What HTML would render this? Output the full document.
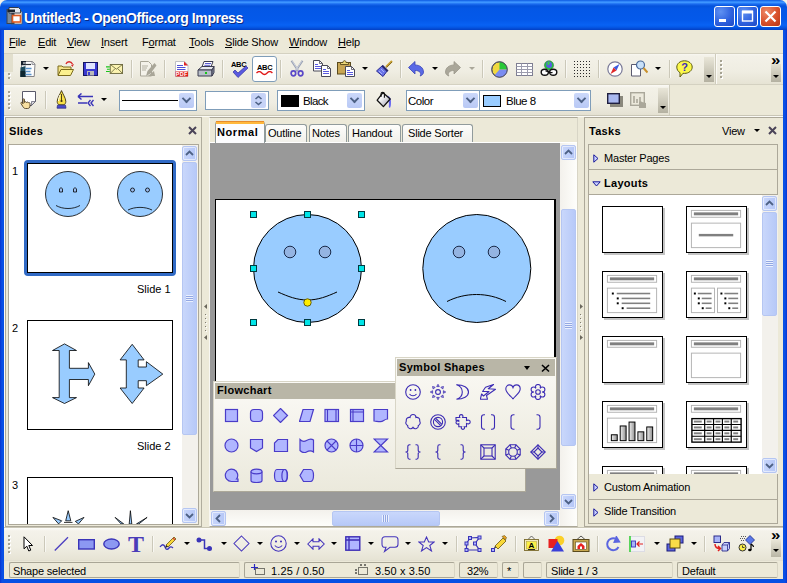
<!DOCTYPE html>
<html lang="en">
<head>
<meta charset="utf-8">
<title>Untitled3 - OpenOffice.org Impress</title>
<style>
html,body{margin:0;padding:0;}
body{width:787px;height:583px;overflow:hidden;background:#ece9d8;font-family:"Liberation Sans",sans-serif;font-size:11px;color:#000;position:relative;}
.a{position:absolute;}
.t{position:absolute;white-space:nowrap;line-height:13px;letter-spacing:-0.2px;}
.b{font-weight:bold;letter-spacing:0.3px;}
u{text-decoration:underline;}
/* window frame */
#frame{left:0;top:0;width:787px;height:583px;background:linear-gradient(to right,#0634d0 0,#0a4fe6 2px,#0650e4 4px,#0650e4 783px,#0a4fe6 785px,#0634d0 787px);}
#titlebar{left:0;top:0;width:787px;height:30px;background:linear-gradient(to bottom,#0651dc 0px,#2a7ff6 1px,#3d95ff 2.5px,#1b6cf0 4px,#0453dc 6px,#0457e6 9px,#0459ea 20px,#0862f4 25px,#0559e8 27px,#0340c4 30px);border-radius:7px 7px 0 0;}
#client{left:4px;top:30px;width:779px;height:549px;background:#ece9d8;}
#title{left:24px;top:9px;font-size:14px;font-weight:bold;color:#fff;line-height:18px;text-shadow:1px 1px 0 #0a2a86;letter-spacing:-0.38px;}
.wb{top:6px;width:21px;height:21px;border-radius:3px;border:1px solid #fff;box-sizing:border-box;background:radial-gradient(circle at 30% 25%,#5f91f2 0%,#2f62df 55%,#1e49c4 100%);}
#wclose{background:radial-gradient(circle at 30% 25%,#ee8a68 0%,#d9512c 55%,#b83415 100%);}
/* menu */
#menubar{left:4px;top:30px;width:779px;height:23px;background:#ece9d8;}
.mi{top:36px;font-size:11px;}
/* toolbars */
.tbsep{width:1px;background:#cbc8b9;box-shadow:1px 0 0 rgba(255,255,255,.6);}
.dd{width:0;height:0;border-left:3px solid transparent;border-right:3px solid transparent;border-top:3px solid #000;}
.hdl{width:3px;background-image:repeating-linear-gradient(to bottom,#a5a292 0,#a5a292 2px,transparent 2px,transparent 4px),repeating-linear-gradient(to bottom,#fff 0,#fff 2px,transparent 2px,transparent 4px);background-position:0 0,1px 1px;background-size:2px 100%,2px 100%;background-repeat:no-repeat;}
.cb{box-sizing:border-box;background:#fff;border:1px solid #7f9db9;}
.cbb{width:15px;height:15px;margin-top:1px;background:linear-gradient(to bottom,#cbd8fa,#b9c9f5);border-radius:2px;}
.cbb:after{content:"";position:absolute;left:4px;top:2px;width:5px;height:5px;border-right:2px solid #4d6185;border-bottom:2px solid #4d6185;transform:rotate(45deg) scale(0.950);}
.grip{width:7px;height:7px;background-image:repeating-linear-gradient(to bottom,#eef3ff 0,#eef3ff 1px,#8ea3e0 1px,#8ea3e0 2px);opacity:.9;}
.hdl1{width:1px;background-image:repeating-linear-gradient(to bottom,#77746a 0,#77746a 1px,transparent 1px,transparent 3px);}
.tab{height:18px;box-sizing:border-box;border:1px solid #919b9c;border-bottom:none;border-radius:3px 3px 0 0;background:linear-gradient(to bottom,#fdfdfb,#f1f0ea);}
.gripv{width:7px;height:7px;background-image:repeating-linear-gradient(to right,#eef3ff 0,#eef3ff 1px,#8ea3e0 1px,#8ea3e0 2px);opacity:.9;}
.sf{height:16px;box-sizing:border-box;border:1px solid #a9a696;border-right-color:#d8d5c4;border-radius:2px;}
.st{font-size:11px;}
.hdl2{width:2px;background-image:repeating-linear-gradient(to bottom,#7f7c70 0,#7f7c70 1px,transparent 1px,transparent 4px),repeating-linear-gradient(to bottom,#fff 0,#fff 1px,transparent 1px,transparent 4px);background-position:0 0,1px 1px;background-size:1px 100%,1px 100%;background-repeat:no-repeat;}
/* generic panel */
.hdr{font-size:11px;font-weight:bold;letter-spacing:0.3px;}
/* scrollbars */
.sbtrack{background:#f3f1ec;}
.sbbtn{width:15px;height:15px;border:1px solid #b5c6f2;box-shadow:inset 0 0 0 1px rgba(255,255,255,.55);border-radius:2px;box-sizing:border-box;background:linear-gradient(to right,#c9d7fb,#b4c6f7);}
.sbthumb{border:1px solid #b5c6f2;border-radius:2px;box-sizing:border-box;background:linear-gradient(to right,#c9d7fb,#b7c9f8);}
</style>
</head>
<body>
<div id="frame" class="a"></div>
<div class="a" style="left:0;top:0;width:8px;height:8px;background:#f4f2e8;"></div>
<div class="a" style="left:779px;top:0;width:8px;height:8px;background:#f4f2e8;"></div>
<div id="titlebar" class="a"></div>
<div id="client" class="a"></div>

<!-- TITLE BAR -->
<div id="title" class="t">Untitled3 - OpenOffice.org Impress</div>
<div class="a wb" style="left:714px;"></div>
<div class="a wb" style="left:737px;"></div>
<div class="a wb" id="wclose" style="left:760px;"></div>

<svg class="a" style="left:6px;top:7px" width="17" height="18" viewBox="0 0 17 18">
<path d="M5 3h9l2 2.500V17H5z" fill="#f4f4f4" stroke="#5a5a5a" stroke-width="0.800"/>
<path d="M0.500 2h8v15h-8z" fill="#3a4450"/><path d="M1.500 5h4v11h-4z" fill="#7a8a9a"/>
<path d="M3 .5h9.500l2 2V6H3z" fill="#e4e8ee" stroke="#2a323c" stroke-width="0.900"/>
<path d="M2 2.500h7v2.500H2z" fill="#1a2430"/>
<rect x="6.500" y="8.500" width="8" height="6.500" fill="#fff" stroke="#e05a20" stroke-width="1.600"/>
</svg>
<svg class="a" style="left:714px;top:6px" width="21" height="21" viewBox="0 0 21 21"><rect x="5" y="13" width="7" height="3" fill="#fff"/></svg>
<svg class="a" style="left:737px;top:6px" width="21" height="21" viewBox="0 0 21 21"><rect x="5.500" y="5.500" width="10" height="9.500" fill="none" stroke="#fff" stroke-width="1.400"/><rect x="5" y="4.500" width="11" height="3" fill="#fff"/></svg>
<svg class="a" style="left:760px;top:6px" width="21" height="21" viewBox="0 0 21 21"><path d="M5.500 5.500l10 10M15.500 5.500l-10 10" stroke="#fff" stroke-width="2.200"/></svg>
<!-- MENU BAR -->
<div id="menubar" class="a"></div>
<div class="t mi" style="left:9px;"><u>F</u>ile</div>
<div class="t mi" style="left:38px;"><u>E</u>dit</div>
<div class="t mi" style="left:67px;"><u>V</u>iew</div>
<div class="t mi" style="left:101px;"><u>I</u>nsert</div>
<div class="t mi" style="left:142px;">F<u>o</u>rmat</div>
<div class="t mi" style="left:189px;"><u>T</u>ools</div>
<div class="t mi" style="left:225px;"><u>S</u>lide Show</div>
<div class="t mi" style="left:289px;"><u>W</u>indow</div>
<div class="t mi" style="left:338px;"><u>H</u>elp</div>

<!-- TOOLBAR 1 -->
<div class="a" style="left:4px;top:53px;width:779px;height:1px;background:#d4d1c1;z-index:1;"></div>
<div class="a" style="left:4px;top:53px;width:779px;height:31px;background:linear-gradient(to bottom,#fbfaf6 0,#f3f1e8 3px,#efede2 60%,#e6e3d4 100%);"></div>
<div class="a" style="left:4px;top:84px;width:779px;height:1px;background:#d4d1c1;"></div>
<div class="a" style="left:4px;top:54px;width:9px;height:18px;background:#e2dfcd;"></div>
<div class="a hdl" style="left:8px;top:73px;height:6px;"></div>
<!-- new doc -->
<svg class="a" style="left:19px;top:60px" width="17" height="18" viewBox="0 0 17 18">
<path d="M3 1.500h10.500l2.500 2.500-.8 12.500H1.500z" fill="#fdfdfd" stroke="#77777c" stroke-width="0.900"/>
<path d="M13 1.500v3h3" fill="#e0e0e0" stroke="#77777c" stroke-width="0.700"/>
<rect x="2" y="1" width="5" height="4.200" fill="#16202c"/>
<path d="M4 3h7" stroke="#fff" stroke-width="1"/><path d="M6 4.500h6" stroke="#30343c" stroke-width="1.200"/>
<path d="M1.500 7.500L6.500 6v11h-5z" fill="#1c4a5c"/><path d="M1.500 11h5v6h-5z" fill="#0c2630"/>
<path d="M6.500 8.500h6M6.500 11.500h5M6.500 14.500h6" stroke="#5a94cc" stroke-width="1.600"/>
</svg>
<div class="a dd" style="left:43px;top:67px;"></div>
<!-- open -->
<svg class="a" style="left:56px;top:60px" width="19" height="17" viewBox="0 0 19 17">
<path d="M2 15V6h4l1 1h8v3" fill="#f5e58a" stroke="#7a6a1c"/>
<path d="M2 15.500l3-6h12.500l-3 6z" fill="#fbf08e" stroke="#7a6a1c"/>
<path d="M10 4c1-3 5-3 6.500 0" fill="none" stroke="#d82a2a" stroke-width="1.300"/><path d="M15 5l3-1-1.500 3z" fill="#d82a2a"/>
</svg>
<!-- save -->
<svg class="a" style="left:83px;top:62px" width="15" height="14" viewBox="0 0 15 14">
<rect x="0.500" y="0.500" width="14" height="13" fill="#3a3ad0" stroke="#141460"/>
<rect x="3" y="1" width="9" height="6" fill="#dfe4ff"/>
<rect x="4" y="9" width="7" height="4.500" fill="#b9b9b9"/><rect x="5" y="10" width="2" height="3" fill="#3a3ad0"/>
</svg>
<!-- mail -->
<svg class="a" style="left:106px;top:64px" width="17" height="10.400" viewBox="0 0 18 11">
<rect x="4.500" y="0.500" width="13" height="9.500" fill="#fbf3b0" stroke="#6e6a40"/>
<path d="M4.500 0.500l6.500 5 6.500-5M4.500 10l5-5M17.500 10l-5-5" fill="none" stroke="#6e6a40" stroke-width="0.900"/>
<path d="M0 3h4M1 5.500h3M0 8h4" stroke="#19c419" stroke-width="1.200"/>
</svg>
<div class="a tbsep" style="left:131px;top:60px;height:18px;"></div>
<!-- edit doc (grey) -->
<svg class="a" style="left:139px;top:61px" width="18" height="16" viewBox="0 0 18 16">
<path d="M1.500 0.500h8l3 3v11.500h-11z" fill="#f4f2ea" stroke="#a9a698"/>
<path d="M3 5h6M3 7h5M3 9h4" stroke="#b4b1a3"/>
<path d="M15.500 2l-7 8-1.500 5 4.500-2.500 6-8z" fill="#a9a698"/>
<path d="M9 15l6-5 1 5z" fill="#a9a698"/>
</svg>
<div class="a tbsep" style="left:164px;top:60px;height:18px;"></div>
<!-- pdf -->
<svg class="a" style="left:175px;top:61px" width="14" height="16" viewBox="0 0 14 16">
<path d="M0.500 0.500h9l3.500 3.500v11.500h-12.500z" fill="#fff" stroke="#b8b8c0" stroke-width="0.900"/>
<path d="M9 0.500l4 4H9z" fill="#e02020"/>
<path d="M2 4.500h6M2 6.500h8.500M2 8.500h8.500" stroke="#5050d8" stroke-width="1"/>
<rect x="0.500" y="10.500" width="12.500" height="5" fill="#e01818"/>
<text x="6.800" y="14.800" font-family="Liberation Sans,sans-serif" font-weight="bold" font-size="5.500" text-anchor="middle" fill="#fff" letter-spacing="0.300">PDF</text>
</svg>
<!-- print -->
<svg class="a" style="left:197px;top:61px" width="18" height="16" viewBox="0 0 18 16">
<path d="M5 6l2-5.500h9l-2 5.500z" fill="#fff" stroke="#3c3c50"/>
<path d="M8 2.500h6M7.300 4.300h6" stroke="#5a5ad0"/>
<path d="M1 9l4-3.500h12l-2 3.500z" fill="#e6e8ee" stroke="#3c3c50"/>
<path d="M1 9h14v6H1z" fill="#b8bec8" stroke="#3c3c50"/>
<path d="M15 9l2-3.500v6L15 15z" fill="#8890a0" stroke="#3c3c50"/>
<rect x="8" y="11" width="2" height="2" fill="#16c816"/>
</svg>
<div class="a tbsep" style="left:222px;top:60px;height:18px;"></div>
<!-- spellcheck -->
<div class="t b" style="left:231px;top:60px;font-size:7.500px;line-height:9px;letter-spacing:-0.300px;">ABC</div>
<svg class="a" style="left:232px;top:66px" width="17" height="12" viewBox="0 0 17 12"><path d="M1 6l2-2 3 3 8-7 2 2-10 9.500z" fill="#5a5ae0" stroke="#3030a0" stroke-width="0.700"/></svg>
<!-- autospell pressed -->
<div class="a" style="left:252px;top:56px;width:25px;height:26px;box-sizing:border-box;background:#fff;border:1px solid #7f9db9;border-radius:3px;"></div>
<div class="t b" style="left:257px;top:63px;font-size:7.500px;line-height:9px;letter-spacing:-0.300px;">ABC</div>
<svg class="a" style="left:256px;top:71px" width="17" height="5" viewBox="0 0 17 5"><path d="M0.500 2c2-2 3.500-2 5.300 0s3.500 2 5.300 0 3.500-2 5.300 0" fill="none" stroke="#e01818" stroke-width="1.300"/></svg>
<div class="a tbsep" style="left:280px;top:60px;height:18px;"></div>
<!-- cut -->
<svg class="a" style="left:290px;top:60px" width="14" height="17" viewBox="0 0 14 17">
<path d="M1.500 0.800l7.500 11.200M12.500 0.800L5 12" stroke="#9aa2b4" stroke-width="2" fill="none"/>
<path d="M2.300 1.200l6.700 10.200M11.700 1.200L5 11.400" stroke="#dfe3ec" stroke-width="0.700" fill="none"/>
<ellipse cx="3.400" cy="13.300" rx="2.300" ry="2.500" fill="none" stroke="#5a48c8" stroke-width="1.700"/>
<ellipse cx="10.600" cy="13.300" rx="2.300" ry="2.500" fill="none" stroke="#5a48c8" stroke-width="1.700"/>
</svg>
<!-- copy -->
<svg class="a" style="left:313px;top:60px" width="18" height="17" viewBox="0 0 18 17">
<path d="M0.500 0.500h6l3 3v7.500h-9z" fill="#fff" stroke="#4a4a58"/>
<path d="M6.500 0.500v3h3" fill="none" stroke="#4a4a58" stroke-width="0.800"/>
<path d="M2 4.500h3M2 6.500h6M2 8.500h6" stroke="#5a5ae0" stroke-width="1"/>
<path d="M8.500 5.500h6l3 3v8h-9z" fill="#fff" stroke="#4a4a58"/>
<path d="M14.500 5.500v3h3" fill="none" stroke="#4a4a58" stroke-width="0.800"/>
<path d="M10 9.500h3M10 11.500h6M10 13.500h6" stroke="#5a5ae0" stroke-width="1"/>
</svg>
<!-- paste -->
<svg class="a" style="left:337px;top:60px" width="18" height="17" viewBox="0 0 18 17">
<rect x="0.500" y="2.500" width="13" height="11.500" fill="#c8a654" stroke="#5a4a1c"/>
<path d="M3.500 4.500v-2h2.500c0-2.500 3-2.500 3 0h2.500v2z" fill="#ecd878" stroke="#5a4a1c" stroke-width="0.900"/>
<path d="M8.500 6.500h6l3 3v7h-9z" fill="#fff" stroke="#4a4a58"/>
<path d="M14.500 6.500v3h3" fill="none" stroke="#4a4a58" stroke-width="0.800"/>
<path d="M10 10.500h3M10 12.500h6M10 14.500h6" stroke="#5a5ae0" stroke-width="1"/>
</svg>
<div class="a dd" style="left:362px;top:67px;"></div>
<!-- format paintbrush -->
<svg class="a" style="left:376px;top:60px" width="17" height="17" viewBox="0 0 17 17">
<path d="M10 7l6-6" stroke="#c8a030" stroke-width="2.200"/><path d="M10.500 7.500l5.500-5.500" stroke="#6a5010" stroke-width="0.700"/>
<path d="M0.500 11l6-5.500 5 5-4.500 6z" fill="#6a74e8" stroke="#2a2a90"/>
<path d="M7 5l5.500 5.500-1.500 1.500-5.500-5.500z" fill="#28286a"/>
<path d="M3 11l3 3M5 9l3 3" stroke="#b8c0ff" stroke-width="0.800"/>
</svg>
<div class="a tbsep" style="left:400px;top:60px;height:18px;"></div>
<!-- undo -->
<svg class="a" style="left:408px;top:61px" width="16" height="16" viewBox="0 0 16 16">
<path d="M0.500 6.500l6.500-6v3.500c5 0 8.500 3 8.500 7 0 2-1.500 3.500-3.500 4 1-1 1-2.500 0-3.800-1-1.200-2.700-1.700-5-1.700v3.500z" fill="#5a6ae6" stroke="#3a44b8" stroke-width="0.800"/>
</svg>
<div class="a dd" style="left:432px;top:67px;"></div>
<!-- redo grey -->
<svg class="a" style="left:445px;top:61px" width="16" height="16" viewBox="0 0 16 16">
<path d="M15.500 6.500l-6.500-6v3.500c-5 0-8.500 3-8.500 7 0 2 1.500 3.500 3.500 4-1-1-1-2.500 0-3.800 1-1.200 2.700-1.700 5-1.700v3.500z" fill="#aaa79a" stroke="#9a978a" stroke-width="0.800"/>
</svg>
<div class="a dd" style="left:469px;top:67px;border-top-color:#aaa79a;"></div>
<div class="a tbsep" style="left:482px;top:60px;height:18px;"></div>
<!-- chart pie -->
<svg class="a" style="left:491px;top:61px" width="17" height="17" viewBox="0 0 17 17">
<circle cx="8.500" cy="8.500" r="7.700" fill="#f0d840" stroke="#4a4a60" stroke-width="0.900"/>
<path d="M8.500 8.500V0.800A7.700 7.700 0 0 1 16.200 8.500z" fill="#28c838"/>
<path d="M8.500 8.500h7.700A7.700 7.700 0 0 1 3.500 14.300z" fill="#7a8cf0"/>
<circle cx="8.500" cy="8.500" r="7.700" fill="none" stroke="#4a4a60" stroke-width="0.900"/>
</svg>
<!-- table -->
<svg class="a" style="left:516px;top:63px" width="17" height="13" viewBox="0 0 17 13">
<rect x="0.500" y="0.500" width="16" height="12" fill="#fff" stroke="#7e7e92"/>
<path d="M0.500 3.500h16M0.500 6.500h16M0.500 9.500h16M5.500 0.500v12M11.500 0.500v12" stroke="#9c9cae" fill="none"/>
</svg>
<!-- hyperlink -->
<svg class="a" style="left:540px;top:60px" width="18" height="17" viewBox="0 0 18 17">
<circle cx="9" cy="5.300" r="4.600" fill="#28c040" stroke="#2a6a4a" stroke-width="0.500"/>
<path d="M6.500 2.500c1.500-1.500 4-1.200 5 .5s.5 4-1 4.800-3.500-.3-4.300-2z" fill="#5a5ae8"/><path d="M8 1.500l2 1-1 2.500-2-.5z" fill="#38d048"/>
<ellipse cx="4.800" cy="12.300" rx="3.600" ry="3" fill="#fff" stroke="#111" stroke-width="1.400"/>
<ellipse cx="13.200" cy="12.300" rx="3.600" ry="3" fill="#fff" stroke="#111" stroke-width="1.400"/>
<path d="M5.500 11.300c2-1.500 3.500 2.500 7 1" fill="none" stroke="#111" stroke-width="1.400"/>
</svg>
<div class="a tbsep" style="left:565px;top:60px;height:18px;"></div>
<!-- grid -->
<svg class="a" style="left:573px;top:60px" width="18" height="18" viewBox="0 0 18 18"><g fill="#2a2a2a"><rect x="1" y="1" width="1" height="1"/><rect x="4" y="1" width="1" height="1"/><rect x="7" y="1" width="1" height="1"/><rect x="10" y="1" width="1" height="1"/><rect x="13" y="1" width="1" height="1"/><rect x="16" y="1" width="1" height="1"/><rect x="1" y="4" width="1" height="1"/><rect x="4" y="4" width="1" height="1"/><rect x="7" y="4" width="1" height="1"/><rect x="10" y="4" width="1" height="1"/><rect x="13" y="4" width="1" height="1"/><rect x="16" y="4" width="1" height="1"/><rect x="1" y="7" width="1" height="1"/><rect x="4" y="7" width="1" height="1"/><rect x="7" y="7" width="1" height="1"/><rect x="10" y="7" width="1" height="1"/><rect x="13" y="7" width="1" height="1"/><rect x="16" y="7" width="1" height="1"/><rect x="1" y="10" width="1" height="1"/><rect x="4" y="10" width="1" height="1"/><rect x="7" y="10" width="1" height="1"/><rect x="10" y="10" width="1" height="1"/><rect x="13" y="10" width="1" height="1"/><rect x="16" y="10" width="1" height="1"/><rect x="1" y="13" width="1" height="1"/><rect x="4" y="13" width="1" height="1"/><rect x="7" y="13" width="1" height="1"/><rect x="10" y="13" width="1" height="1"/><rect x="13" y="13" width="1" height="1"/><rect x="16" y="13" width="1" height="1"/><rect x="1" y="16" width="1" height="1"/><rect x="4" y="16" width="1" height="1"/><rect x="7" y="16" width="1" height="1"/><rect x="10" y="16" width="1" height="1"/><rect x="13" y="16" width="1" height="1"/><rect x="16" y="16" width="1" height="1"/></g></svg>
<div class="a tbsep" style="left:598px;top:60px;height:18px;"></div>
<!-- navigator -->
<svg class="a" style="left:607px;top:61px" width="16" height="16" viewBox="0 0 16 16">
<circle cx="8" cy="8" r="7.200" fill="#fff" stroke="#7a7a98" stroke-width="1.200"/>
<path d="M12.500 3l-3 6.500-3-3z" fill="#3a5ae0"/><path d="M3.500 13l3-6.500 3 3z" fill="#e02828"/>
</svg>
<!-- zoom -->
<svg class="a" style="left:631px;top:60px" width="17" height="17" viewBox="0 0 17 17">
<path d="M0.500 4.500h7l2 2v9.500h-9z" fill="#fff" stroke="#5a5a70"/>
<circle cx="9.500" cy="5" r="4" fill="#c8e0f8" stroke="#4a6a9a" stroke-width="1.200"/>
<path d="M12.500 8l4 4.500" stroke="#c8902a" stroke-width="2"/>
</svg>
<div class="a dd" style="left:655px;top:67px;"></div>
<div class="a tbsep" style="left:669px;top:60px;height:18px;"></div>
<!-- help -->
<svg class="a" style="left:676px;top:60px" width="17" height="18" viewBox="0 0 17 18">
<path d="M8.500 0.800c4.300 0 7.700 2.800 7.700 6.300s-3.400 6.300-7.700 6.300c-.5 0-1 0-1.500-.1L4 17v-4.300C2 11.500.8 9.500.8 7.100.8 3.600 4.200.8 8.500.8z" fill="#fcf84a" stroke="#5a5a10" stroke-width="1"/>
<text x="8.500" y="11" font-family="Liberation Sans,sans-serif" font-weight="bold" font-size="11" text-anchor="middle" fill="#3a2ab8">?</text>
</svg>
<!-- overflow -->
<div class="a" style="left:704px;top:57px;width:10px;height:25px;background:linear-gradient(to bottom,#e9e6d8,#b4b1a1);"></div>
<div class="a dd" style="left:706px;top:75px;"></div>
<div class="a" style="left:715px;top:54px;width:1px;height:30px;background:#cfccbc;"></div><div class="a" style="left:716px;top:54px;width:1px;height:30px;background:#fbfaf6;"></div><div class="a hdl" style="left:720px;top:60px;height:19px;"></div>
<div class="a" style="left:771px;top:64px;width:10px;height:18px;background:linear-gradient(to bottom,#e4e1d2,#b4b1a1);"></div>
<div class="t b" style="left:771px;top:53px;font-size:14px;line-height:14px;letter-spacing:0;transform:scaleX(1.200);transform-origin:0 0;">»</div>
<div class="a dd" style="left:773px;top:75px;"></div>

<!--TB1END-->
<!-- TOOLBAR 2 -->
<div class="a" style="left:4px;top:85px;width:779px;height:30px;background:#ece9d8;"></div><div class="a" style="left:4px;top:85px;width:665px;height:30px;background:linear-gradient(to bottom,#fbfaf6 0,#f3f1e7 3px,#efede2 60%,#e4e1d2 100%);"></div><div class="a" style="left:669px;top:85px;width:1px;height:30px;background:#cfccbc;"></div>
<div class="a" style="left:4px;top:115px;width:779px;height:1px;background:#c9c6b6;"></div>
<div class="a" style="left:4px;top:116px;width:779px;height:1px;background:#fbfaf5;"></div>
<div class="a hdl" style="left:8px;top:91px;height:19px;"></div>
<!-- page+hand -->
<svg class="a" style="left:20px;top:91px" width="17" height="18" viewBox="0 0 17 18">
<path d="M2.500 0.500h13v10l-4 4h-9z" fill="#fff" stroke="#5a5a6a"/>
<path d="M15.500 10.500h-4v4z" fill="#d8d8e0" stroke="#5a5a6a" stroke-width="0.700"/>
<path d="M3 8.500c0-1 1.500-1 1.500 0v3c.5-1 1.700-1 2 0 .5-.8 1.600-.6 1.800.3.600-.6 1.700-.2 1.700.8v2.400c0 1.500-1 2.500-2.500 2.500h-2c-1.200 0-2-.8-2.600-1.800L1 12.500c-.5-1 .7-1.600 1.300-.8l.7 1z" fill="#f8e0a0" stroke="#3a2a10" stroke-width="0.800"/>
</svg>
<div class="a tbsep" style="left:45px;top:91px;height:18px;"></div>
<!-- pen nib -->
<svg class="a" style="left:56px;top:90px" width="11" height="19" viewBox="0 0 11 19">
<path d="M5.500 0.600C4.500 3.500 1.200 8 1.200 11.500c0 1.500.7 2.500 1.600 3.300h5.400c.9-.8 1.600-1.800 1.600-3.300C9.800 8 6.500 3.500 5.500 0.600z" fill="#f8e048" stroke="#3a3010" stroke-width="0.900"/>
<path d="M4 5c-.8 2-1.500 4-1.500 6" stroke="#fff" stroke-width="1" fill="none"/>
<path d="M5.500 4v7" stroke="#3a3010" stroke-width="0.900"/><circle cx="5.500" cy="11" r="1.100" fill="#3a3010"/>
<path d="M1.500 15.200h8l.5 3h-9z" fill="#4a4ad0" stroke="#28287a" stroke-width="0.700"/>
</svg>
<!-- arrows -->
<svg class="a" style="left:77px;top:93px" width="17" height="14" viewBox="0 0 17 14">
<path d="M1 3.500h15M1 3.500l3.500-3M1 3.500l3.500 3" stroke="#3a34b8" stroke-width="1.500" fill="none"/>
<path d="M1 10h9" stroke="#3a34b8" stroke-width="1.500"/>
<path d="M13.500 7L11 10l2.500 3M16.500 7L14 10l2.500 3" stroke="#3a34b8" stroke-width="1.400" fill="none"/>
</svg>
<div class="a dd" style="left:101px;top:98px;"></div>
<!-- line style combo -->
<div class="a cb" style="left:119px;top:90px;width:78px;height:21px;"></div>
<div class="a" style="left:122px;top:100px;width:56px;height:1px;background:#000;"></div>
<div class="a cbb" style="left:179px;top:92px;"></div>
<!-- width spin -->
<div class="a cb" style="left:205px;top:91px;width:64px;height:19px;"></div>
<div class="a" style="left:251px;top:93px;width:15px;height:15px;background:#c6d3f7;border-radius:2px;"></div>
<svg class="a" style="left:251px;top:93px" width="15" height="15" viewBox="0 0 15 15"><path d="M4.500 6l3-2.500 3 2.500M4.500 9l3 2.500 3-2.500" stroke="#4d6185" stroke-width="1.600" fill="none"/></svg>
<!-- colour combo -->
<div class="a cb" style="left:277px;top:90px;width:88px;height:21px;"></div>
<div class="a" style="left:281px;top:95px;width:18px;height:12px;background:#000;"></div>
<div class="t" style="left:303px;top:94px;font-size:11.500px;line-height:14px;letter-spacing:-0.650px;">Black</div>
<div class="a cbb" style="left:347px;top:92px;"></div>
<!-- bucket -->
<svg class="a" style="left:376px;top:91px" width="18" height="18" viewBox="0 0 18 18">
<defs><linearGradient id="bk" x1="0" y1="0" x2="1" y2="1"><stop offset="0.300" stop-color="#fff"/><stop offset="1" stop-color="#9a9aa8"/></linearGradient></defs>
<path d="M11.500 4.500c2.500 1 3.500 3 3.500 6 0 2.500 0 4.500-.8 6-.8.600-1.500 0-1.400-1.200.3-2.800.2-5.300-1.300-7z" fill="#6a6af0"/>
<path d="M1.200 9.200L7 1.700 14.200 8 7.400 15.600z" fill="url(#bk)" stroke="#111" stroke-width="1.300" stroke-linejoin="round"/>
<path d="M5 6V3c0-2.200 3.400-2.200 3.400 0v3.800" fill="none" stroke="#111" stroke-width="1.100"/>
</svg>
<!-- Color combo -->
<div class="a cb" style="left:406px;top:90px;width:74px;height:21px;"></div>
<div class="t" style="left:408px;top:94px;font-size:11.500px;line-height:14px;letter-spacing:-0.500px;">Color</div>
<div class="a cbb" style="left:463px;top:92px;"></div>
<!-- Blue 8 combo -->
<div class="a cb" style="left:479px;top:90px;width:112px;height:21px;"></div>
<div class="a" style="left:483px;top:95px;width:18px;height:12px;background:#99ccff;box-sizing:border-box;border:1px solid #000;"></div>
<div class="t" style="left:506px;top:94px;font-size:11.500px;line-height:14px;letter-spacing:-0.500px;">Blue 8</div>
<div class="a cbb" style="left:574px;top:92px;"></div>
<!-- shadow -->
<svg class="a" style="left:607px;top:93px" width="16" height="15" viewBox="0 0 16 15">
<rect x="3" y="3" width="13" height="11" fill="#8a887c"/>
<rect x="0.700" y="0.700" width="11.600" height="9.600" fill="#a9b8f0" stroke="#202040" stroke-width="1.400"/>
</svg>
<!-- greyed -->
<svg class="a" style="left:630px;top:92px" width="18" height="17" viewBox="0 0 18 17">
<rect x="0.700" y="0.700" width="13.600" height="12.600" fill="#ece9dc" stroke="#aaa79a" stroke-width="1.400"/>
<path d="M4 4v7M7 7v4M10 5v6" stroke="#aaa79a" stroke-width="1.600"/>
<path d="M9 10c1-1 2-1 3 0l4 1v5H9z" fill="#aaa79a"/>
</svg>
<div class="a" style="left:658px;top:88px;width:10px;height:25px;background:linear-gradient(to bottom,#e9e6d8,#b4b1a1);"></div>
<div class="a dd" style="left:660px;top:106px;"></div>

<!--TB2END-->
<!-- SLIDES PANEL -->
<div class="a" style="left:4px;top:117px;width:1px;height:410px;background:#fbfaf5;"></div>
<div class="a" style="left:5px;top:117px;width:197px;height:410px;box-sizing:border-box;border:1px solid #aca899;border-right-color:#b0ad9e;background:#ece9d8;"></div>
<div class="t hdr" style="left:9px;top:125px;">Slides</div>
<svg class="a" style="left:188px;top:126px" width="9" height="9" viewBox="0 0 9 9"><path d="M1 1l7 7M8 1l-7 7" stroke="#4a4458" stroke-width="2"/></svg>
<div class="a" style="left:8px;top:144px;width:191px;height:381px;box-sizing:border-box;border:1px solid #aca899;background:#fff;"></div>
<!-- scrollbar -->
<div class="a sbtrack" style="left:182px;top:145px;width:16px;height:379px;"></div>
<div class="a sbbtn" style="left:182px;top:146px;"></div>
<svg class="a" style="left:182px;top:146px" width="15" height="15" viewBox="0 0 15 15"><path d="M4 9l3.500-3.500 3.500 3.500" stroke="#4d6185" stroke-width="1.800" fill="none"/></svg>
<div class="a sbthumb" style="left:182px;top:162px;width:15px;height:273px;"></div>
<div class="a grip" style="left:186px;top:295px;"></div>
<div class="a sbbtn" style="left:182px;top:508px;"></div>
<svg class="a" style="left:182px;top:508px" width="15" height="15" viewBox="0 0 15 15"><path d="M4 6l3.500 3.500 3.500-3.500" stroke="#4d6185" stroke-width="1.800" fill="none"/></svg>
<!-- slide 1 -->
<div class="t" style="left:12px;top:165px;">1</div>
<div class="a" style="left:24px;top:160px;width:152px;height:116px;box-sizing:border-box;border:3px solid #316ac5;border-radius:4px;"></div>
<div class="a" style="left:27px;top:163px;width:146px;height:110px;box-sizing:border-box;border:1px solid #000;background:#fff;"></div>
<svg class="a" style="left:27px;top:163px" width="146" height="110" viewBox="0 0 146 110">
<circle cx="41" cy="31" r="22.500" fill="#99ccff" stroke="#000" stroke-width="0.800"/>
<path d="M32.500 29v-3l1.500-1.500 1.500 1.500v3zM46.500 29v-3l1.500-1.500 1.500 1.500v3z" fill="#99bbee" stroke="#000" stroke-width="0.800"/>
<path d="M29 42.500c7 4 17 4 24 0" fill="none" stroke="#000" stroke-width="0.800"/>
<circle cx="113" cy="31" r="22.500" fill="#99ccff" stroke="#000" stroke-width="0.800"/>
<circle cx="105.500" cy="27" r="2" fill="#99bbee" stroke="#000" stroke-width="0.800"/><circle cx="120.500" cy="27" r="2" fill="#99bbee" stroke="#000" stroke-width="0.800"/>
<path d="M101 47c7-3.500 17-3.500 24 0" fill="none" stroke="#000" stroke-width="0.800"/>
</svg>
<div class="t" style="left:137px;top:283px;letter-spacing:0;">Slide 1</div>
<!-- slide 2 -->
<div class="t" style="left:12px;top:322px;">2</div>
<div class="a" style="left:27px;top:320px;width:146px;height:110px;box-sizing:border-box;border:1px solid #000;background:#fff;"></div>
<svg class="a" style="left:27px;top:320px" width="146" height="110" viewBox="0 0 146 110">
<path d="M37.500 23.900L49.500 30.500H42.400V48.300H61.400V42.600L67.800 54.100 61.400 65.700V59.500H42.400V77.600H49.500L37.500 83.500 25.500 77.600H32.200V30.500H25.500z" fill="#99ccff" stroke="#000" stroke-width="0.800"/>
<path d="M105.200 24.300L117.100 39.900H111.200V47H119.400V41.700L135.800 54.100 119.400 65.700V60.700H111.200V68H117.100L105.200 83.500 93.100 68H99.300V39.900H93.100z" fill="#99ccff" stroke="#000" stroke-width="0.800"/>
</svg>
<div class="t" style="left:137px;top:440px;letter-spacing:0;">Slide 2</div>
<!-- slide 3 -->
<div class="t" style="left:12px;top:479px;">3</div>
<div class="a" style="left:27px;top:477px;width:146px;height:47px;box-sizing:border-box;border:1px solid #000;border-bottom:none;background:#fff;overflow:hidden;"></div>
<svg class="a" style="left:27px;top:477px" width="146" height="47" viewBox="0 0 146 47">
<path d="M41.200 33.700L38.700 43.800H43.800zM25.900 40.400L31.600 46.900 34.700 43.800zM57 40.400L48.300 44.400 51.500 46.900z" fill="#99ccff" stroke="#000" stroke-width="0.800"/><path d="M37 45.400h8.500" stroke="#000" stroke-width="0.800"/>
<path d="M103.400 33.700L102.200 47h2.600zM88.100 40.400L96.700 46.900 94 46.900zM120.100 40.400L111.900 46.900 109.500 46.900z" fill="#99ccff" stroke="#000" stroke-width="0.800"/>
</svg>
<!-- splitter left -->
<div class="a" style="left:202px;top:117px;width:7px;height:410px;background:#ece9d8;"></div>
<div class="a hdl2" style="left:205px;top:314px;height:19px;"></div>
<svg class="a" style="left:204px;top:304px" width="3" height="5" viewBox="0 0 3 5"><path d="M3 0v5L0 2.500z" fill="#6a675c"/></svg>
<svg class="a" style="left:204px;top:335px" width="3" height="5" viewBox="0 0 3 5"><path d="M3 0v5L0 2.500z" fill="#6a675c"/></svg>
<!--SLIDESEND-->
<!-- CENTER -->
<div class="a" style="left:209px;top:117px;width:369px;height:410px;box-sizing:border-box;border:1px solid #aca899;border-left-color:#f8f7f2;border-right-color:#d8d5c6;background:#ece9d8;"></div>
<!-- tabs -->
<div class="a tab" style="left:265px;top:124px;width:42px;"></div><div class="t" style="left:268px;top:127px;">Outline</div>
<div class="a tab" style="left:309px;top:124px;width:38px;"></div><div class="t" style="left:312px;top:127px;">Notes</div>
<div class="a tab" style="left:348px;top:124px;width:53px;"></div><div class="t" style="left:352px;top:127px;">Handout</div>
<div class="a tab" style="left:402px;top:124px;width:71px;"></div><div class="t" style="left:408px;top:127px;">Slide Sorter</div>
<div class="a" style="left:210px;top:142px;width:367px;height:1px;background:#fff;"></div>
<div class="a" style="left:215px;top:121px;width:50px;height:22px;box-sizing:border-box;border:1px solid #919b9c;border-bottom:none;border-top:3px solid #ffb83c;border-radius:3px 3px 0 0;background:#fcfcfe;"></div>
<div class="a" style="left:216px;top:121px;width:48px;height:1px;background:#e68b2c;"></div>
<div class="t b" style="left:217px;top:126px;letter-spacing:0.600px;">Normal</div>
<!-- workspace -->
<div class="a" style="left:210px;top:143px;width:350px;height:367px;background:#999;"></div>
<!-- slide page -->
<div class="a" style="left:215px;top:199px;width:341px;height:257px;box-sizing:border-box;border:1px solid #000;border-right-width:2px;border-bottom-width:2px;background:#fff;"></div>
<svg class="a" style="left:215px;top:199px" width="342" height="257" viewBox="215 199 342 257">
<circle cx="307.500" cy="268.500" r="54" fill="#99ccff" stroke="#000" stroke-width="1"/>
<circle cx="290" cy="252" r="5.800" fill="#94b4e2" stroke="#1a2a4a" stroke-width="1"/>
<circle cx="325" cy="252" r="5.800" fill="#94b4e2" stroke="#1a2a4a" stroke-width="1"/>
<path d="M278 292c10 4.500 19 8 29.500 8s19.500-3.500 29.500-8" fill="none" stroke="#000" stroke-width="1"/>
<circle cx="476.800" cy="268.500" r="54" fill="#99ccff" stroke="#000" stroke-width="1"/>
<circle cx="459" cy="252" r="5.800" fill="#94b4e2" stroke="#1a2a4a" stroke-width="1"/>
<circle cx="494" cy="252" r="5.800" fill="#94b4e2" stroke="#1a2a4a" stroke-width="1"/>
<path d="M447 301.500c9-4.500 19-7 29.500-7s20.500 2.500 29.500 7" fill="none" stroke="#000" stroke-width="1"/>
<g fill="#00e5e8" stroke="#003a40" stroke-width="1">
<rect x="250.500" y="211.500" width="6" height="6"/><rect x="304.500" y="211.500" width="6" height="6"/><rect x="358.500" y="211.500" width="6" height="6"/>
<rect x="250.500" y="265.500" width="6" height="6"/><rect x="358.500" y="265.500" width="6" height="6"/>
<rect x="250.500" y="319.500" width="6" height="6"/><rect x="304.500" y="319.500" width="6" height="6"/><rect x="358.500" y="319.500" width="6" height="6"/>
</g>
<circle cx="307.500" cy="302.500" r="3.700" fill="#ffee00" stroke="#5a5000" stroke-width="0.900"/>
</svg>
<!-- v scrollbar -->
<div class="a sbtrack" style="left:560px;top:143px;width:17px;height:383px;background:linear-gradient(to right,#f3f1ec,#fefefb);"></div>
<div class="a sbbtn" style="left:561px;top:145px;"></div>
<svg class="a" style="left:561px;top:145px" width="15" height="15" viewBox="0 0 15 15"><path d="M4 9l3.500-3.500 3.500 3.500" stroke="#4d6185" stroke-width="1.800" fill="none"/></svg>
<div class="a sbthumb" style="left:561px;top:209px;width:15px;height:237px;"></div>
<div class="a grip" style="left:565px;top:322px;"></div>
<div class="a sbbtn" style="left:561px;top:494px;"></div>
<svg class="a" style="left:561px;top:494px" width="15" height="15" viewBox="0 0 15 15"><path d="M4 6l3.500 3.500 3.500-3.500" stroke="#4d6185" stroke-width="1.800" fill="none"/></svg>
<!-- h scrollbar -->
<div class="a sbtrack" style="left:210px;top:510px;width:350px;height:16px;background:linear-gradient(to bottom,#f3f1ec,#fefefb);"></div>
<div class="a sbbtn" style="left:211px;top:511px;"></div>
<svg class="a" style="left:211px;top:511px" width="15" height="15" viewBox="0 0 15 15"><path d="M9 4l-3.500 3.500 3.500 3.500" stroke="#4d6185" stroke-width="1.800" fill="none"/></svg>
<div class="a sbthumb" style="left:332px;top:511px;width:108px;height:15px;background:linear-gradient(to bottom,#c9d7fb,#b7c9f8);"></div>
<div class="a gripv" style="left:382px;top:515px;"></div>
<div class="a sbbtn" style="left:544px;top:511px;"></div>
<svg class="a" style="left:544px;top:511px" width="15" height="15" viewBox="0 0 15 15"><path d="M6 4l3.500 3.500-3.500 3.500" stroke="#4d6185" stroke-width="1.800" fill="none"/></svg>
<!-- Flowchart floating toolbar -->
<div class="a" style="left:213px;top:381px;width:313px;height:111px;box-sizing:border-box;border:1px solid #aca899;border-top-color:#d8d5c6;border-left-color:#d8d5c6;background:linear-gradient(to bottom,#fbfaf6,#ebe9dc);"></div>
<div class="a" style="left:215px;top:383px;width:309px;height:16px;background:#b9b6a7;"></div>
<div class="t hdr" style="left:217px;top:384px;">Flowchart</div>
<svg class="a" style="left:224px;top:408px" width="16" height="15" viewBox="0 0 16 15"><rect x="1.500" y="1.500" width="12" height="12" fill="#b0b6ff" stroke="#4a3cc8" stroke-width="1.2"/></svg>
<svg class="a" style="left:249px;top:408px" width="16" height="15" viewBox="0 0 16 15"><rect x="1.500" y="1.500" width="12" height="12" rx="3.500" fill="#b0b6ff" stroke="#4a3cc8" stroke-width="1.2"/></svg>
<svg class="a" style="left:273px;top:408px" width="16" height="15" viewBox="0 0 16 15"><path d="M7.500 0.500l7 7-7 7-7-7z" fill="#b0b6ff" stroke="#4a3cc8" stroke-width="1.2"/></svg>
<svg class="a" style="left:299px;top:408px" width="16" height="15" viewBox="0 0 16 15"><path d="M4 1.500h10.500l-3.500 12h-10.500z" fill="#b0b6ff" stroke="#4a3cc8" stroke-width="1.2"/></svg>
<svg class="a" style="left:324px;top:408px" width="16" height="15" viewBox="0 0 16 15"><rect x="1" y="1.500" width="13.500" height="12" fill="#b0b6ff" stroke="#4a3cc8" stroke-width="1.2"/><path d="M3.500 1.500v12M12 1.500v12" stroke="#4a3cc8" stroke-width="1.100"/></svg>
<svg class="a" style="left:349px;top:408px" width="16" height="15" viewBox="0 0 16 15"><rect x="1.500" y="1.500" width="13" height="12" fill="#b0b6ff" stroke="#4a3cc8" stroke-width="1.2"/><path d="M4 1.500v12M1.500 4h13" stroke="#4a3cc8" stroke-width="1.100"/></svg>
<svg class="a" style="left:373px;top:408px" width="16" height="15" viewBox="0 0 16 15"><path d="M1 1.500h13.500v9.500c-3.500 0-4 2.700-7 2.700s-4.500-.7-6.500-.7z" fill="#b0b6ff" stroke="#4a3cc8" stroke-width="1.2"/></svg>
<svg class="a" style="left:224px;top:438px" width="16" height="15" viewBox="0 0 16 15"><circle cx="7.500" cy="7.500" r="6.500" fill="#b0b6ff" stroke="#4a3cc8" stroke-width="1.2"/></svg>
<svg class="a" style="left:249px;top:438px" width="16" height="15" viewBox="0 0 16 15"><path d="M1.500 1.500h12v8.500l-6 3.500-6-3.500z" fill="#b0b6ff" stroke="#4a3cc8" stroke-width="1.2"/></svg>
<svg class="a" style="left:273px;top:438px" width="16" height="15" viewBox="0 0 16 15"><path d="M5 1.500h9.500v12h-13V5z" fill="#b0b6ff" stroke="#4a3cc8" stroke-width="1.2"/></svg>
<svg class="a" style="left:299px;top:438px" width="16" height="15" viewBox="0 0 16 15"><path d="M1 1.500c2 2 4 2.500 6.500 1s5-2 7-.5v12c-2-1.500-4.500-1.500-7 0S3 14.500 1 12.500z" fill="#b0b6ff" stroke="#4a3cc8" stroke-width="1.2"/></svg>
<svg class="a" style="left:324px;top:438px" width="16" height="15" viewBox="0 0 16 15"><circle cx="7.500" cy="7.500" r="6.500" fill="#b0b6ff" stroke="#4a3cc8" stroke-width="1.2"/><path d="M3 3l9 9M12 3l-9 9" stroke="#4a3cc8" stroke-width="1.100"/></svg>
<svg class="a" style="left:349px;top:438px" width="16" height="15" viewBox="0 0 16 15"><circle cx="7.500" cy="7.500" r="6.500" fill="#b0b6ff" stroke="#4a3cc8" stroke-width="1.2"/><path d="M7.500 1v13M1 7.500h13" stroke="#4a3cc8" stroke-width="1.100"/></svg>
<svg class="a" style="left:373px;top:438px" width="16" height="15" viewBox="0 0 16 15"><path d="M1 1h13.500l-6.700 6.500 6.700 6.500H1l6.700-6.500z" fill="#b0b6ff" stroke="#4a3cc8" stroke-width="1.2"/></svg>
<svg class="a" style="left:224px;top:468px" width="16" height="15" viewBox="0 0 16 15"><path d="M14 13.500H7.500a6.200 6.200 0 1 1 5-2.500h1.500z" fill="#b0b6ff" stroke="#4a3cc8" stroke-width="1.2"/></svg>
<svg class="a" style="left:249px;top:468px" width="16" height="15" viewBox="0 0 16 15"><path d="M2 3.500v9c0 1.200 2.500 2 5.500 2s5.500-.8 5.500-2v-9" fill="#b0b6ff" stroke="#4a3cc8" stroke-width="1.2"/><ellipse cx="7.500" cy="3.500" rx="5.500" ry="2.300" fill="#b0b6ff" stroke="#4a3cc8" stroke-width="1.2"/></svg>
<svg class="a" style="left:273px;top:468px" width="16" height="15" viewBox="0 0 16 15"><path d="M4 1.500h8c1.500 0 2.500 2.700 2.500 6s-1 6-2.500 6H4c-1.500 0-2.500-2.700-2.500-6s1-6 2.500-6z" fill="#b0b6ff" stroke="#4a3cc8" stroke-width="1.2"/><ellipse cx="11.500" cy="7.500" rx="2.600" ry="6" fill="#b0b6ff" stroke="#4a3cc8" stroke-width="1.2"/></svg>
<svg class="a" style="left:299px;top:468px" width="16" height="15" viewBox="0 0 16 15"><path d="M4.500 1.500h7c2 0 3 2.700 3 6s-1 6-3 6h-7l-3.500-6z" fill="#b0b6ff" stroke="#4a3cc8" stroke-width="1.2"/></svg>
<!--FLOWEND-->
<!-- Symbol Shapes floating toolbar -->
<div class="a" style="left:395px;top:357px;width:162px;height:112px;box-sizing:border-box;border:1px solid #aca899;border-top-color:#d8d5c6;border-left-color:#d8d5c6;background:linear-gradient(to bottom,#fbfaf6,#ebe9dc);"></div>
<div class="a" style="left:397px;top:359px;width:158px;height:17px;background:#b9b6a7;"></div>
<div class="t hdr" style="left:399px;top:361px;">Symbol Shapes</div>
<div class="a dd" style="left:524px;top:366px;border-left-width:3.500px;border-right-width:3.500px;border-top-width:4px;"></div>
<svg class="a" style="left:541px;top:364px" width="9" height="9" viewBox="0 0 9 9"><path d="M1 1l7 6.500M8 1l-7 6.500" stroke="#000" stroke-width="1.600"/></svg>
<svg class="a" style="left:405px;top:384px" width="16" height="16" viewBox="0 0 16 16"><circle cx="8" cy="8" r="7.300" fill="none" stroke="#3c2cb4" stroke-width="1.1"/><circle cx="5.600" cy="6" r="0.900" fill="#3c2cb4"/><circle cx="10.400" cy="6" r="0.900" fill="#3c2cb4"/><path d="M4.500 10c1.800 2.300 5.200 2.300 7 0" fill="none" stroke="#3c2cb4" stroke-width="1.1"/></svg>
<svg class="a" style="left:430px;top:384px" width="16" height="16" viewBox="0 0 16 16"><circle cx="8" cy="8" r="2.400" fill="none" stroke="#3c2cb4" stroke-width="1.1"/><path d="M8 0.300l-1.300 2.300h2.600z" transform="rotate(0 8 8)" fill="#3c2cb4" fill-opacity="0.250" stroke="#3c2cb4" stroke-width="0.800" stroke-linejoin="round"/><path d="M8 0.300l-1.300 2.300h2.600z" transform="rotate(45 8 8)" fill="#3c2cb4" fill-opacity="0.250" stroke="#3c2cb4" stroke-width="0.800" stroke-linejoin="round"/><path d="M8 0.300l-1.300 2.300h2.600z" transform="rotate(90 8 8)" fill="#3c2cb4" fill-opacity="0.250" stroke="#3c2cb4" stroke-width="0.800" stroke-linejoin="round"/><path d="M8 0.300l-1.300 2.300h2.600z" transform="rotate(135 8 8)" fill="#3c2cb4" fill-opacity="0.250" stroke="#3c2cb4" stroke-width="0.800" stroke-linejoin="round"/><path d="M8 0.300l-1.300 2.300h2.600z" transform="rotate(180 8 8)" fill="#3c2cb4" fill-opacity="0.250" stroke="#3c2cb4" stroke-width="0.800" stroke-linejoin="round"/><path d="M8 0.300l-1.300 2.300h2.600z" transform="rotate(225 8 8)" fill="#3c2cb4" fill-opacity="0.250" stroke="#3c2cb4" stroke-width="0.800" stroke-linejoin="round"/><path d="M8 0.300l-1.300 2.300h2.600z" transform="rotate(270 8 8)" fill="#3c2cb4" fill-opacity="0.250" stroke="#3c2cb4" stroke-width="0.800" stroke-linejoin="round"/><path d="M8 0.300l-1.300 2.300h2.600z" transform="rotate(315 8 8)" fill="#3c2cb4" fill-opacity="0.250" stroke="#3c2cb4" stroke-width="0.800" stroke-linejoin="round"/></svg>
<svg class="a" style="left:455px;top:384px" width="16" height="16" viewBox="0 0 16 16"><path d="M1.500 .700c7 0 12 3 12 7.300s-5 7.300-12 7.300c4-1.300 5.800-4 5.800-7.300S5.500 2 1.500 .700z" fill="none" stroke="#3c2cb4" stroke-width="1.1"/></svg>
<svg class="a" style="left:480px;top:384px" width="16" height="16" viewBox="0 0 16 16"><path d="M5.500 3.300L13.500 .500 8.300 4.700l7.200.5L6.500 11.500l1 3.800H.300L1.600 10l1.900 2L9 7.500H2.600z" fill="none" stroke="#3c2cb4" stroke-width="1.1" stroke-linejoin="round"/></svg>
<svg class="a" style="left:505px;top:384px" width="16" height="16" viewBox="0 0 16 16"><path d="M8 14.800C5 11.500.8 8.500.8 5 .8 2.500 2.500.9 4.500.9c1.600 0 3 1 3.500 2.600C8.500 1.900 9.900.9 11.500.9c2 0 3.700 1.600 3.700 4.100 0 3.500-4.200 6.500-7.200 9.800z" fill="none" stroke="#3c2cb4" stroke-width="1.1"/></svg>
<svg class="a" style="left:530px;top:384px" width="16" height="16" viewBox="0 0 16 16"><circle cx="8.00" cy="3.00" r="2.55" fill="none" stroke="#3c2cb4" stroke-width="1.1"/><circle cx="12.33" cy="5.50" r="2.55" fill="none" stroke="#3c2cb4" stroke-width="1.1"/><circle cx="12.33" cy="10.50" r="2.55" fill="none" stroke="#3c2cb4" stroke-width="1.1"/><circle cx="8.00" cy="13.00" r="2.55" fill="none" stroke="#3c2cb4" stroke-width="1.1"/><circle cx="3.67" cy="10.50" r="2.55" fill="none" stroke="#3c2cb4" stroke-width="1.1"/><circle cx="3.67" cy="5.50" r="2.55" fill="none" stroke="#3c2cb4" stroke-width="1.1"/><circle cx="8" cy="8" r="4.300" fill="#f3f1e8" stroke="none"/><circle cx="8" cy="8" r="2.300" fill="none" stroke="#3c2cb4" stroke-width="1.1"/></svg>
<svg class="a" style="left:405px;top:414px" width="16" height="16" viewBox="0 0 16 16"><path d="M5.05 3.51A2.9 2.9 0 0 1 10.95 3.51A2.9 2.9 0 0 1 14.63 7.04A2.9 2.9 0 0 1 13.32 11.44A2.9 2.9 0 0 1 8.00 13.40A2.9 2.9 0 0 1 2.68 11.44A2.9 2.9 0 0 1 1.37 7.04A2.9 2.9 0 0 1 5.05 3.51z" fill="none" stroke="#3c2cb4" stroke-width="1.1"/></svg>
<svg class="a" style="left:430px;top:414px" width="16" height="16" viewBox="0 0 16 16"><circle cx="8" cy="8" r="7.300" fill="none" stroke="#3c2cb4" stroke-width="1.1"/><circle cx="8" cy="8" r="4.600" fill="none" stroke="#3c2cb4" stroke-width="1.1"/><path d="M4.200 5.200l6.600 6.400M5.400 4l6.500 6.400" fill="none" stroke="#3c2cb4" stroke-width="1.1"/></svg>
<svg class="a" style="left:455px;top:414px" width="16" height="16" viewBox="0 0 16 16"><path d="M1 3.500h3.800c-.8-1.600-.2-2.900 1.400-2.900s2.200 1.300 1.400 2.900h3.900v3c1.600-.8 3.700-.3 3.700 1.500s-2.100 2.300-3.700 1.500v3.300H9.200c.7 1.300.3 2.600-1.300 2.600s-2-1.300-1.300-2.600H3.800V9.700c-1.200.8-2.800.3-2.800-1.200s1.600-2 2.800-1.200V6.200H1z" fill="none" stroke="#3c2cb4" stroke-width="1.1"/></svg>
<svg class="a" style="left:480px;top:414px" width="16" height="16" viewBox="0 0 16 16"><path d="M5 .8H4c-1.500 0-2.500 1-2.500 2.500v9.400c0 1.500 1 2.500 2.500 2.500h1M11 .8h1c1.500 0 2.500 1 2.500 2.500v9.400c0 1.500-1 2.500-2.500 2.500h-1" fill="none" stroke="#3c2cb4" stroke-width="1.1"/></svg>
<svg class="a" style="left:505px;top:414px" width="16" height="16" viewBox="0 0 16 16"><path d="M9.500 .8h-1C7 .8 6 1.800 6 3.300v9.400c0 1.500 1 2.500 2.500 2.500h1" fill="none" stroke="#3c2cb4" stroke-width="1.1"/></svg>
<svg class="a" style="left:530px;top:414px" width="16" height="16" viewBox="0 0 16 16"><path d="M6.500 .8h1c1.500 0 2.500 1 2.500 2.500v9.400c0 1.500-1 2.500-2.500 2.500h-1" fill="none" stroke="#3c2cb4" stroke-width="1.1"/></svg>
<svg class="a" style="left:405px;top:444px" width="16" height="16" viewBox="0 0 16 16"><path d="M5.500 .800h-1C3.300 .800 2.800 1.500 2.800 2.700v3.500C2.800 7.300 2 8 .500 8 2 8 2.800 8.700 2.800 9.800v3.500c0 1.200.5 1.900 1.700 1.900h1M10.500 .800h1c1.200 0 1.700.7 1.700 1.900v3.500c0 1.100.8 1.800 2.300 1.800-1.500 0-2.300.7-2.300 1.800v3.500c0 1.200-.5 1.900-1.700 1.900h-1" fill="none" stroke="#3c2cb4" stroke-width="1.1"/></svg>
<svg class="a" style="left:430px;top:444px" width="16" height="16" viewBox="0 0 16 16"><path d="M10.500 .8h-1c-1.200 0-1.700.7-1.700 1.900v3.500C7.800 7.300 7 8 5.500 8 7 8 7.800 8.700 7.800 9.800v3.500c0 1.200.5 1.900 1.700 1.900h1" fill="none" stroke="#3c2cb4" stroke-width="1.1"/></svg>
<svg class="a" style="left:455px;top:444px" width="16" height="16" viewBox="0 0 16 16"><path d="M5.500 .8h1c1.200 0 1.700.7 1.700 1.900v3.500C8.200 7.300 9 8 10.500 8 9 8 8.200 8.700 8.200 9.800v3.500c0 1.200-.5 1.900-1.700 1.900h-1" fill="none" stroke="#3c2cb4" stroke-width="1.1"/></svg>
<svg class="a" style="left:480px;top:444px" width="16" height="16" viewBox="0 0 16 16"><rect x=".8" y=".8" width="14.400" height="14.400" fill="none" stroke="#3c2cb4" stroke-width="1.1"/><rect x="4" y="4" width="8" height="8" fill="none" stroke="#3c2cb4" stroke-width="1.1"/><path d="M.8 .8L4 4M15.200 .8L12 4M.8 15.200L4 12M15.200 15.200L12 12" fill="none" stroke="#3c2cb4" stroke-width="1.1"/></svg>
<svg class="a" style="left:505px;top:444px" width="16" height="16" viewBox="0 0 16 16"><path d="M5 .8h6l4.200 4.200v6L11 15.200H5L.8 11V5z" fill="none" stroke="#3c2cb4" stroke-width="1.1"/><circle cx="8" cy="8" r="4.300" fill="none" stroke="#3c2cb4" stroke-width="1.1"/><path d="M5 .8l1.300 3.200M11 .8L9.700 4M15.200 5L12 6.300M15.200 11L12 9.700M11 15.200L9.700 12M5 15.200L6.300 12M.8 11L4 9.700M.8 5L4 6.300" fill="none" stroke="#3c2cb4" stroke-width="1.1"/></svg>
<svg class="a" style="left:530px;top:444px" width="16" height="16" viewBox="0 0 16 16"><path d="M8 .8l7.200 7.200L8 15.200 .8 8z" fill="none" stroke="#3c2cb4" stroke-width="1.1"/><path d="M8 4l4 4-4 4-4-4z" fill="none" stroke="#3c2cb4" stroke-width="1.1"/><path d="M8 .8V4M15.200 8H12M8 15.200V12M.8 8H4" fill="none" stroke="#3c2cb4" stroke-width="1.1"/></svg>
<!--SYMBEND-->
<!-- right splitter -->
<div class="a" style="left:578px;top:117px;width:6px;height:410px;background:#ece9d8;"></div>
<div class="a hdl2" style="left:580px;top:314px;height:19px;"></div>
<svg class="a" style="left:580px;top:304px" width="3" height="5" viewBox="0 0 3 5"><path d="M0 0v5l3-2.500z" fill="#6a675c"/></svg>
<svg class="a" style="left:580px;top:335px" width="3" height="5" viewBox="0 0 3 5"><path d="M0 0v5l3-2.500z" fill="#6a675c"/></svg>
<!--CENTEREND-->
<!-- TASKS PANEL -->
<div class="a" style="left:584px;top:117px;width:199px;height:410px;box-sizing:border-box;border:1px solid #aca899;border-right:none;background:#ece9d8;"></div>
<div class="t hdr" style="left:589px;top:125px;">Tasks</div>
<div class="t" style="left:722px;top:125px;">View</div>
<div class="a dd" style="left:754px;top:129px;"></div>
<svg class="a" style="left:768px;top:126px" width="9" height="9" viewBox="0 0 9 9"><path d="M1 1l7 7M8 1l-7 7" stroke="#4a4458" stroke-width="2"/></svg>
<div class="a" style="left:588px;top:144px;width:190px;height:380px;box-sizing:border-box;border:1px solid #aca899;background:#ece9d8;"></div>
<div class="a" style="left:589px;top:169px;width:188px;height:1px;background:#aca899;"></div>
<div class="a" style="left:589px;top:194px;width:188px;height:1px;background:#aca899;"></div>
<div class="a" style="left:589px;top:499px;width:188px;height:1px;background:#aca899;"></div>
<svg class="a" style="left:593px;top:154px" width="6" height="9" viewBox="0 0 6 9"><path d="M.8 .8v7.400l4.200-3.700z" fill="#c8d0ff" stroke="#1a1a9a" stroke-width="1"/></svg>
<div class="t" style="left:604px;top:152px;font-size:11px;">Master Pages</div>
<svg class="a" style="left:592px;top:181px" width="9" height="6" viewBox="0 0 9 6"><path d="M.8 .8h7.400l-3.700 4.200z" fill="#c8d0ff" stroke="#1a1a9a" stroke-width="1"/></svg>
<div class="t hdr" style="left:604px;top:177px;">Layouts</div>
<svg class="a" style="left:593px;top:483px" width="6" height="9" viewBox="0 0 6 9"><path d="M.8 .8v7.400l4.200-3.700z" fill="#c8d0ff" stroke="#1a1a9a" stroke-width="1"/></svg>
<div class="t" style="left:604px;top:481px;font-size:11px;">Custom Animation</div>
<svg class="a" style="left:593px;top:508px" width="6" height="9" viewBox="0 0 6 9"><path d="M.8 .8v7.400l4.200-3.700z" fill="#c8d0ff" stroke="#1a1a9a" stroke-width="1"/></svg>
<div class="t" style="left:604px;top:505px;font-size:11px;">Slide Transition</div>
<div class="a" style="left:589px;top:195px;width:189px;height:279px;background:#fff;overflow:hidden;">
<div class="a" style="left:15px;top:13px;width:61px;height:47px;background:#c4c4c4;"></div><div class="a" style="left:13px;top:11px;width:61px;height:47px;box-sizing:border-box;border:1px solid #000;background:#fff;"></div><svg class="a" style="left:13px;top:11px" width="61" height="47" viewBox="0 0 62 48" preserveAspectRatio="none"></svg>
<div class="a" style="left:99px;top:13px;width:61px;height:47px;background:#c4c4c4;"></div><div class="a" style="left:97px;top:11px;width:61px;height:47px;box-sizing:border-box;border:1px solid #000;background:#fff;"></div><svg class="a" style="left:97px;top:11px" width="61" height="47" viewBox="0 0 62 48" preserveAspectRatio="none"><rect x="5.500" y="4.500" width="50" height="7" fill="#fff" stroke="#b4b4b4"/><rect x="8" y="6.500" width="45" height="3" fill="#808080"/><rect x="5.500" y="17.500" width="50" height="25" fill="#fff" stroke="#b4b4b4"/><rect x="13" y="28.500" width="35" height="2.500" fill="#808080"/></svg>
<div class="a" style="left:15px;top:78px;width:61px;height:47px;background:#c4c4c4;"></div><div class="a" style="left:13px;top:76px;width:61px;height:47px;box-sizing:border-box;border:1px solid #000;background:#fff;"></div><svg class="a" style="left:13px;top:76px" width="61" height="47" viewBox="0 0 62 48" preserveAspectRatio="none"><rect x="5.500" y="4.500" width="50" height="7" fill="#fff" stroke="#b4b4b4"/><rect x="8" y="6.500" width="45" height="3" fill="#808080"/><rect x="5.500" y="17.500" width="50" height="25" fill="#fff" stroke="#b4b4b4"/><rect x="10" y="22" width="2" height="2" fill="#000"/><rect x="15" y="22.2" width="34" height="1.600" fill="#808080"/><rect x="15" y="27" width="2" height="2" fill="#000"/><rect x="20" y="27.2" width="29" height="1.600" fill="#808080"/><rect x="15" y="32" width="2" height="2" fill="#000"/><rect x="20" y="32.2" width="29" height="1.600" fill="#808080"/><rect x="20" y="37" width="2" height="2" fill="#000"/><rect x="25" y="37.2" width="24" height="1.600" fill="#808080"/></svg>
<div class="a" style="left:99px;top:78px;width:61px;height:47px;background:#c4c4c4;"></div><div class="a" style="left:97px;top:76px;width:61px;height:47px;box-sizing:border-box;border:1px solid #000;background:#fff;"></div><svg class="a" style="left:97px;top:76px" width="61" height="47" viewBox="0 0 62 48" preserveAspectRatio="none"><rect x="5.500" y="4.500" width="50" height="7" fill="#fff" stroke="#b4b4b4"/><rect x="8" y="6.500" width="45" height="3" fill="#808080"/><rect x="5.500" y="17.500" width="23.500" height="25" fill="#fff" stroke="#b4b4b4"/><rect x="32" y="17.500" width="23.500" height="25" fill="#fff" stroke="#b4b4b4"/><rect x="8" y="22" width="2" height="2" fill="#000"/><rect x="12" y="22.2" width="14" height="1.600" fill="#808080"/><rect x="12" y="27" width="2" height="2" fill="#000"/><rect x="16" y="27.2" width="10" height="1.600" fill="#808080"/><rect x="12" y="32" width="2" height="2" fill="#000"/><rect x="16" y="32.2" width="10" height="1.600" fill="#808080"/><rect x="16" y="37" width="2" height="2" fill="#000"/><rect x="20" y="37.2" width="6" height="1.600" fill="#808080"/><rect x="35" y="22" width="2" height="2" fill="#000"/><rect x="39" y="22.2" width="14" height="1.600" fill="#808080"/><rect x="39" y="27" width="2" height="2" fill="#000"/><rect x="43" y="27.2" width="10" height="1.600" fill="#808080"/><rect x="39" y="32" width="2" height="2" fill="#000"/><rect x="43" y="32.2" width="10" height="1.600" fill="#808080"/><rect x="43" y="37" width="2" height="2" fill="#000"/><rect x="47" y="37.2" width="6" height="1.600" fill="#808080"/></svg>
<div class="a" style="left:15px;top:143px;width:61px;height:47px;background:#c4c4c4;"></div><div class="a" style="left:13px;top:141px;width:61px;height:47px;box-sizing:border-box;border:1px solid #000;background:#fff;"></div><svg class="a" style="left:13px;top:141px" width="61" height="47" viewBox="0 0 62 48" preserveAspectRatio="none"><rect x="5.500" y="4.500" width="50" height="7" fill="#fff" stroke="#b4b4b4"/><rect x="8" y="6.500" width="45" height="3" fill="#808080"/></svg>
<div class="a" style="left:99px;top:143px;width:61px;height:47px;background:#c4c4c4;"></div><div class="a" style="left:97px;top:141px;width:61px;height:47px;box-sizing:border-box;border:1px solid #000;background:#fff;"></div><svg class="a" style="left:97px;top:141px" width="61" height="47" viewBox="0 0 62 48" preserveAspectRatio="none"><rect x="5.500" y="4.500" width="50" height="7" fill="#fff" stroke="#b4b4b4"/><rect x="8" y="6.500" width="45" height="3" fill="#808080"/><rect x="5.500" y="17.500" width="50" height="25" fill="#fff" stroke="#b4b4b4"/></svg>
<div class="a" style="left:15px;top:208px;width:61px;height:47px;background:#c4c4c4;"></div><div class="a" style="left:13px;top:206px;width:61px;height:47px;box-sizing:border-box;border:1px solid #000;background:#fff;"></div><svg class="a" style="left:13px;top:206px" width="61" height="47" viewBox="0 0 62 48" preserveAspectRatio="none"><defs><linearGradient id="bg" x1="0" x2="1" y1="0" y2="0"><stop offset="0" stop-color="#f0f0f0"/><stop offset="1" stop-color="#909090"/></linearGradient></defs><rect x="5.500" y="4.500" width="50" height="7" fill="#fff" stroke="#b4b4b4"/><rect x="8" y="6.500" width="45" height="3" fill="#808080"/><rect x="5.500" y="17.500" width="50" height="25" fill="#fff" stroke="#b4b4b4"/><rect x="9.5" y="34.5" width="6" height="6.0" fill="url(#bg)" stroke="#000" stroke-width="1"/><rect x="18.5" y="25.5" width="6" height="15.0" fill="url(#bg)" stroke="#000" stroke-width="1"/><rect x="27.5" y="21.5" width="6" height="19.0" fill="url(#bg)" stroke="#000" stroke-width="1"/><rect x="36.5" y="31.5" width="6" height="9.0" fill="url(#bg)" stroke="#000" stroke-width="1"/><rect x="45.5" y="26.5" width="6" height="14.0" fill="url(#bg)" stroke="#000" stroke-width="1"/></svg>
<div class="a" style="left:99px;top:208px;width:61px;height:47px;background:#c4c4c4;"></div><div class="a" style="left:97px;top:206px;width:61px;height:47px;box-sizing:border-box;border:1px solid #000;background:#fff;"></div><svg class="a" style="left:97px;top:206px" width="61" height="47" viewBox="0 0 62 48" preserveAspectRatio="none"><rect x="5.500" y="4.500" width="50" height="7" fill="#fff" stroke="#b4b4b4"/><rect x="8" y="6.500" width="45" height="3" fill="#808080"/><rect x="6" y="18" width="50" height="24" fill="#fff" stroke="#000" stroke-width="1.400"/><path d="M6 24h50" stroke="#000" stroke-width="1.200"/><path d="M6 30h50" stroke="#000" stroke-width="1.200"/><path d="M6 36h50" stroke="#000" stroke-width="1.200"/><path d="M19 18v24" stroke="#000" stroke-width="1.200"/><path d="M28 18v24" stroke="#000" stroke-width="1.200"/><path d="M37 18v24" stroke="#000" stroke-width="1.200"/><path d="M46 18v24" stroke="#000" stroke-width="1.200"/><rect x="8" y="20" width="8" height="2" fill="#808080"/><rect x="21" y="20" width="5" height="2" fill="#808080"/><rect x="30" y="20" width="5" height="2" fill="#808080"/><rect x="39" y="20" width="5" height="2" fill="#808080"/><rect x="48" y="20" width="5" height="2" fill="#808080"/><rect x="8" y="26" width="8" height="2" fill="#808080"/><rect x="21" y="26" width="5" height="2" fill="#808080"/><rect x="30" y="26" width="5" height="2" fill="#808080"/><rect x="39" y="26" width="5" height="2" fill="#808080"/><rect x="48" y="26" width="5" height="2" fill="#808080"/><rect x="8" y="32" width="8" height="2" fill="#808080"/><rect x="21" y="32" width="5" height="2" fill="#808080"/><rect x="30" y="32" width="5" height="2" fill="#808080"/><rect x="39" y="32" width="5" height="2" fill="#808080"/><rect x="48" y="32" width="5" height="2" fill="#808080"/><rect x="8" y="38" width="8" height="2" fill="#808080"/><rect x="21" y="38" width="5" height="2" fill="#808080"/><rect x="30" y="38" width="5" height="2" fill="#808080"/><rect x="39" y="38" width="5" height="2" fill="#808080"/><rect x="48" y="38" width="5" height="2" fill="#808080"/></svg>
<div class="a" style="left:15px;top:273px;width:61px;height:47px;background:#c4c4c4;"></div><div class="a" style="left:13px;top:271px;width:61px;height:47px;box-sizing:border-box;border:1px solid #000;background:#fff;"></div><svg class="a" style="left:13px;top:271px" width="61" height="47" viewBox="0 0 62 48" preserveAspectRatio="none"><rect x="5.500" y="4.500" width="50" height="7" fill="#fff" stroke="#b4b4b4"/><rect x="8" y="6.500" width="45" height="3" fill="#808080"/></svg>
<div class="a" style="left:99px;top:273px;width:61px;height:47px;background:#c4c4c4;"></div><div class="a" style="left:97px;top:271px;width:61px;height:47px;box-sizing:border-box;border:1px solid #000;background:#fff;"></div><svg class="a" style="left:97px;top:271px" width="61" height="47" viewBox="0 0 62 48" preserveAspectRatio="none"><rect x="5.500" y="4.500" width="50" height="7" fill="#fff" stroke="#b4b4b4"/><rect x="8" y="6.500" width="45" height="3" fill="#808080"/></svg>
</div>
<div class="a sbtrack" style="left:762px;top:195px;width:16px;height:279px;"></div>
<div class="a sbbtn" style="left:762px;top:196px;"></div>
<svg class="a" style="left:762px;top:196px" width="15" height="15" viewBox="0 0 15 15"><path d="M4 9l3.500-3.500 3.500 3.500" stroke="#4d6185" stroke-width="1.800" fill="none"/></svg>
<div class="a sbthumb" style="left:762px;top:212px;width:15px;height:104px;"></div>
<div class="a grip" style="left:766px;top:260px;"></div>
<div class="a sbbtn" style="left:762px;top:458px;"></div>
<svg class="a" style="left:762px;top:458px" width="15" height="15" viewBox="0 0 15 15"><path d="M4 6l3.500 3.500 3.500-3.500" stroke="#4d6185" stroke-width="1.800" fill="none"/></svg>
<!--TASKSEND-->
<!-- DRAWING TOOLBAR -->
<div class="a" style="left:4px;top:527px;width:779px;height:1px;background:#c9c6b6;"></div>
<div class="a" style="left:4px;top:528px;width:779px;height:32px;background:linear-gradient(to bottom,#fdfcf9 0,#f4f2ea 3px,#efede2 60%,#e6e3d4 100%);"></div>
<div class="a" style="left:4px;top:560px;width:779px;height:1px;background:#e2dfd0;"></div>
<div class="a hdl" style="left:8px;top:535px;height:19px;"></div>
<!-- select arrow -->
<svg class="a" style="left:23px;top:536px" width="11" height="16" viewBox="0 0 11 16"><path d="M1 .8v12l2.800-2.600 2 4.800 2-.9-2-4.600h3.700z" fill="#fff" stroke="#000" stroke-width="1"/></svg>
<div class="a tbsep" style="left:44px;top:536px;height:16px;"></div>
<svg class="a" style="left:54px;top:536px" width="15" height="16" viewBox="0 0 15 16"><path d="M.8 14.500L14 1.200" stroke="#4a3cc0" stroke-width="1.300"/></svg>
<svg class="a" style="left:78px;top:539px" width="17" height="11" viewBox="0 0 17 11"><rect x=".7" y=".7" width="15.600" height="9.300" fill="#8c98f2" stroke="#3a34b8" stroke-width="1.400"/></svg>
<svg class="a" style="left:103px;top:538px" width="17" height="12" viewBox="0 0 17 12"><ellipse cx="8.500" cy="6" rx="7.700" ry="5" fill="#8c98f2" stroke="#3a34b8" stroke-width="1.400"/></svg>
<div class="t b" style="left:128px;top:532px;font-family:'Liberation Serif',serif;font-size:24px;line-height:24px;color:#4a3cb8;">T</div>
<div class="a tbsep" style="left:152px;top:536px;height:16px;"></div>
<!-- freeform -->
<svg class="a" style="left:159px;top:535px" width="18" height="17" viewBox="0 0 18 17">
<path d="M1 12c2-3 4-3 5 0s2.500 3 4 1 3-1 4 0" fill="none" stroke="#3a34b8" stroke-width="1.300"/>
<path d="M7 10l8-8 2 2-8 8z" fill="#f8d838" stroke="#6a5410" stroke-width="0.800"/><path d="M7 10l-.8 2.800L9 12z" fill="#222"/><path d="M14 3l2 2" stroke="#d04040" stroke-width="1.200"/>
</svg>
<div class="a dd" style="left:184px;top:542px;"></div>
<!-- connector -->
<svg class="a" style="left:196px;top:537px" width="17" height="15" viewBox="0 0 17 15">
<path d="M3 3h5.500v8.500H14" fill="none" stroke="#3a34b8" stroke-width="1.500"/><circle cx="3" cy="3" r="2.500" fill="#3a34b8"/><circle cx="13.500" cy="11.500" r="2.500" fill="#3a34b8"/>
</svg>
<div class="a dd" style="left:221px;top:542px;"></div>
<svg class="a" style="left:233px;top:535px" width="17" height="17" viewBox="0 0 17 17"><path d="M8.500 1l7.500 7.500-7.500 7.500L1 8.500z" fill="none" stroke="#4434bc" stroke-width="1.050"/></svg>
<div class="a dd" style="left:257px;top:542px;"></div>
<svg class="a" style="left:270px;top:535px" width="17" height="17" viewBox="0 0 17 17"><circle cx="8.500" cy="8.500" r="7.700" fill="none" stroke="#4434bc" stroke-width="1.050"/><circle cx="6" cy="6.500" r="1" fill="#3c2cb4"/><circle cx="11" cy="6.500" r="1" fill="#3c2cb4"/><path d="M4.800 10.500c2 2.600 5.400 2.600 7.400 0" fill="none" stroke="#4434bc" stroke-width="1.050"/></svg>
<div class="a dd" style="left:294px;top:542px;"></div>
<svg class="a" style="left:307px;top:538px" width="18" height="12" viewBox="0 0 18 12"><path d="M.8 6L6 .8v3h6v-3L17.200 6 12 11.200v-3H6v3z" fill="none" stroke="#4434bc" stroke-width="1.050"/></svg>
<div class="a dd" style="left:331px;top:542px;"></div>
<svg class="a" style="left:345px;top:536px" width="16" height="15" viewBox="0 0 16 15"><rect x=".8" y=".8" width="14" height="13.400" fill="#b0b6ff" stroke="#3c2cb4" stroke-width="1.400"/><path d="M4 .8v13.400M.8 4h14" stroke="#3c2cb4" stroke-width="1.300"/></svg>
<div class="a dd" style="left:368px;top:542px;"></div>
<svg class="a" style="left:381px;top:536px" width="18" height="17" viewBox="0 0 18 17"><path d="M4 .8h10c2 0 3 1 3 3v4.500c0 2-1 3-3 3H9L3.500 15.500 5 11.300H4c-2 0-3-1-3-3V3.800c0-2 1-3 3-3z" fill="none" stroke="#4434bc" stroke-width="1.050"/></svg>
<div class="a dd" style="left:405px;top:542px;"></div>
<svg class="a" style="left:418px;top:536px" width="17" height="16" viewBox="0 0 17 16"><path d="M8.500 1l2.200 5h5.500l-4.400 3.500 1.700 5.500-5-3.400-5 3.400L5.200 9.500.8 6h5.500z" fill="none" stroke="#4434bc" stroke-width="1.050"/></svg>
<div class="a dd" style="left:442px;top:542px;"></div>
<div class="a tbsep" style="left:456px;top:536px;height:16px;"></div>
<!-- edit points -->
<svg class="a" style="left:464px;top:535px" width="18" height="17" viewBox="0 0 18 17">
<path d="M2.500 8.500L6 3l9.500-.5L11 8.500l4.500 6.500H2.500z" fill="none" stroke="#3a34b8" stroke-width="1.200"/>
<g fill="#b0b6ff" stroke="#3a34b8" stroke-width="1"><rect x="1" y="7" width="3" height="3"/><rect x="4.500" y="1.500" width="3" height="3"/><rect x="14" y="1" width="3" height="3"/><rect x="9.500" y="7" width="3" height="3"/><rect x="14" y="13.500" width="3" height="3"/><rect x="1" y="13.500" width="3" height="3"/></g>
</svg>
<!-- glue -->
<svg class="a" style="left:491px;top:535px" width="16" height="17" viewBox="0 0 16 17">
<path d="M4 11L12 3l3 3-8 8z" fill="#f8d838" stroke="#6a5410" stroke-width="0.800"/><path d="M11 1.500l3.500 3.500 1-2.500-2-2z" fill="#e8a020" stroke="#6a5410" stroke-width="0.600"/>
<path d="M4 11l-1.500 3 3-1.500z" fill="#444"/><rect x=".5" y="13.500" width="3" height="3" fill="#b0b6ff" stroke="#3a34b8" stroke-width="1"/>
</svg>
<div class="a tbsep" style="left:515px;top:536px;height:16px;"></div>
<!-- fontwork -->
<svg class="a" style="left:523px;top:535px" width="17" height="17" viewBox="0 0 17 17">
<path d="M5 4.500l3.500-3.500L12 4.500" fill="none" stroke="#555" stroke-width="0.900"/>
<rect x="1.500" y="4.500" width="14" height="11" fill="#f4ecc0" stroke="#7a6a2c" stroke-width="0.900"/>
<rect x="3.500" y="6.500" width="10" height="7.500" fill="#fbf048" stroke="#a89838" stroke-width="0.500"/>
<text x="8.500" y="13.300" font-family="Liberation Sans,sans-serif" font-weight="bold" font-size="8" text-anchor="middle" fill="#000">A</text>
<path d="M5 14.500h7" stroke="#000" stroke-width="0.800"/>
</svg>
<!-- from file -->
<svg class="a" style="left:548px;top:535px" width="17" height="17" viewBox="0 0 17 17">
<circle cx="11.500" cy="5.500" r="4.800" fill="#fbd028"/>
<rect x=".5" y="4" width="9" height="9" fill="#e82020"/>
<path d="M9.500 6l6.500 10.500H3z" fill="#3a40d8"/>
</svg>
<!-- gallery -->
<svg class="a" style="left:572px;top:535px" width="18" height="17" viewBox="0 0 18 17">
<path d="M5 4.500l4-3.500 4 3.500" fill="none" stroke="#444" stroke-width="0.900"/>
<rect x="1" y="4.500" width="16" height="12" fill="#c8a850" stroke="#5a4a1c" stroke-width="1"/>
<rect x="3.500" y="7" width="11" height="7.500" fill="#fff" stroke="#5a4a1c" stroke-width="0.600"/>
<path d="M5.500 11L9 8l3.500 3v3h-7z" fill="#e82020"/><rect x="8" y="11.500" width="2" height="2.500" fill="#fff"/>
</svg>
<div class="a tbsep" style="left:597px;top:536px;height:16px;"></div>
<!-- rotate -->
<svg class="a" style="left:605px;top:536px" width="17" height="16" viewBox="0 0 17 16">
<path d="M10 2.500A6 6 0 1 0 13.500 11" fill="none" stroke="#5a64e0" stroke-width="2"/><path d="M9 0l7.500 4.500L10 8.500z" fill="#5a64e0" transform="rotate(28 12 4)"/>
</svg>
<!-- alignment -->
<svg class="a" style="left:629px;top:536px" width="16" height="16" viewBox="0 0 16 16">
<rect x=".5" y=".5" width="15" height="15" fill="#f2f2f5" stroke="#dcdce4"/>
<path d="M1 0v16" stroke="#20d020" stroke-width="1.400"/>
<rect x="2.500" y="5" width="4" height="6" fill="#a8b4f8" stroke="#3a34b8" stroke-width="0.900"/>
<path d="M14 8H8.500M10.500 5.500L8 8l2.500 2.500" fill="none" stroke="#e02020" stroke-width="1.200"/>
</svg>
<div class="a dd" style="left:654px;top:542px;"></div>
<!-- arrange -->
<svg class="a" style="left:666px;top:535px" width="18" height="17" viewBox="0 0 18 17">
<rect x="9" y="1" width="8" height="7" fill="#5a64e0" stroke="#1a1a7a" stroke-width="1"/>
<rect x="1" y="9" width="8" height="7" fill="#5a64e0" stroke="#1a1a7a" stroke-width="1"/>
<rect x="4" y="4" width="10" height="9" fill="#f8dc48" stroke="#5a4a10" stroke-width="1"/>
</svg>
<div class="a dd" style="left:691px;top:542px;"></div>
<div class="a tbsep" style="left:704px;top:536px;height:16px;"></div>
<!-- 3d convert -->
<svg class="a" style="left:713px;top:535px" width="17" height="17" viewBox="0 0 17 17">
<rect x="1" y="1" width="6.500" height="6.500" fill="#a8b4f8" stroke="#2a2a8a" stroke-width="1"/>
<path d="M2 9c0 3 2 4.500 5 4.500M5 11l2.500 2.500L5 16" fill="none" stroke="#e02020" stroke-width="1.500"/>
<path d="M9 10l2-2.500h5.500v6L14.500 16H9z" fill="#c8d0fc" stroke="#2a2a8a" stroke-width="0.900"/><path d="M9 10h5.500V16M14.500 10l2-2.500" fill="none" stroke="#2a2a8a" stroke-width="0.800"/>
</svg>
<!-- interaction -->
<svg class="a" style="left:738px;top:535px" width="17" height="17" viewBox="0 0 17 17">
<g fill="#555"><rect x="3" y="1" width="1" height="1"/><rect x="5" y="1" width="1" height="1"/><rect x="7" y="1" width="1" height="1"/><rect x="2" y="3" width="1" height="1"/><rect x="4" y="3" width="1" height="1"/><rect x="6" y="3" width="1" height="1"/><rect x="3" y="5" width="1" height="1"/><rect x="5" y="5" width="1" height="1"/></g>
<path d="M12 .5l4.500 4.500L12 9.500 7.500 5z" fill="#5a78e8" stroke="#1a2a8a" stroke-width="0.800"/>
<circle cx="4.500" cy="12.500" r="3.500" fill="#fbf048" stroke="#333" stroke-width="1"/><path d="M4.500 10.500v2h2" fill="none" stroke="#333" stroke-width="0.900"/>
<path d="M13 9v6M13 9c1 1 2.500 1 2.500 3" fill="none" stroke="#000" stroke-width="1.200"/><ellipse cx="11.800" cy="15" rx="1.700" ry="1.300" fill="#000"/>
</svg>
<div class="a" style="left:771px;top:539px;width:10px;height:18px;background:linear-gradient(to bottom,#ebe8da,#b9b6a6);"></div>
<div class="t b" style="left:771px;top:528px;font-size:14px;line-height:14px;letter-spacing:0;transform:scaleX(1.200);transform-origin:0 0;">»</div>
<div class="a dd" style="left:773px;top:549px;"></div>

<!-- STATUS BAR -->
<div class="a" style="left:4px;top:561px;width:779px;height:18px;background:#ece9d8;"></div>
<div class="a sf" style="left:9px;top:562px;width:231px;"></div>
<div class="a sf" style="left:244px;top:562px;width:211px;"></div>
<div class="a sf" style="left:459px;top:562px;width:39px;"></div>
<div class="a sf" style="left:502px;top:562px;width:17px;"></div>
<div class="a sf" style="left:523px;top:562px;width:19px;"></div>
<div class="a sf" style="left:546px;top:562px;width:127px;"></div>
<div class="a sf" style="left:677px;top:562px;width:101px;"></div>
<div class="t st" style="left:13px;top:565px;">Shape selected</div>
<svg class="a" style="left:251px;top:564px" width="15" height="12" viewBox="0 0 15 12"><path d="M3.500 0v6M0 3.500h7" stroke="#2a2ac0" stroke-width="1.200"/><rect x="4.500" y="4.500" width="9" height="6" fill="none" stroke="#000" stroke-width="1" stroke-dasharray="1 1"/></svg>
<div class="t st" style="left:271px;top:565px;letter-spacing:0.150px;">1.25 / 0.50</div>
<svg class="a" style="left:355px;top:564px" width="15" height="12" viewBox="0 0 15 12"><rect x="3.500" y="3.500" width="9" height="7" fill="none" stroke="#000" stroke-width="1" stroke-dasharray="1 1"/><path d="M5 1h2M9 1h2M1 5v2M1 8v2" stroke="#000" stroke-width="1"/></svg>
<div class="t st" style="left:375px;top:565px;letter-spacing:0.100px;">3.50 x 3.50</div>
<div class="t st" style="left:467px;top:565px;">32%</div>
<div class="t st" style="left:507px;top:565px;">*</div>
<div class="t st" style="left:551px;top:565px;">Slide 1 / 3</div>
<div class="t st" style="left:682px;top:565px;">Default</div>

<!--DRAWEND-->

</body>
</html>
